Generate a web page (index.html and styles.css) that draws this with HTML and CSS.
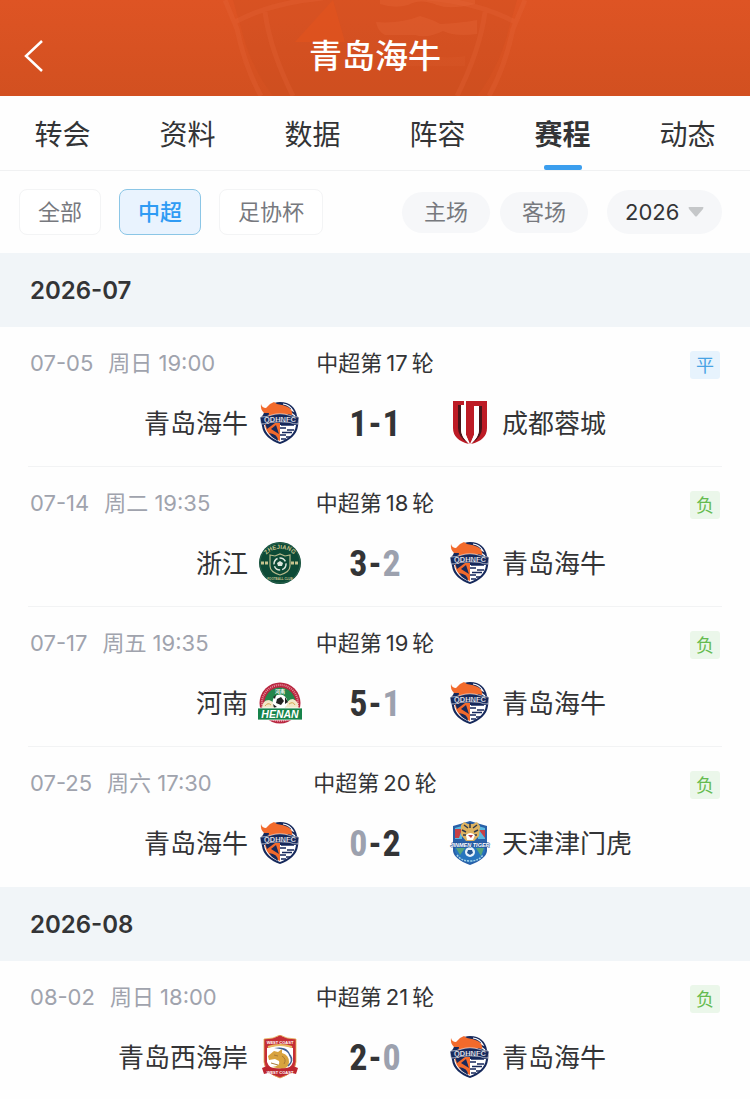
FILE: index.html
```html
<!DOCTYPE html>
<html lang="zh-CN">
<head>
<meta charset="utf-8">
<meta name="viewport" content="width=device-width, initial-scale=1">
<title>青岛海牛</title>
<link rel="stylesheet" href="styles.css">
</head>
<body>
<svg class="defs" aria-hidden="true">
  <symbol id="crest-hainiu" viewBox="0 0 44 44">
    <path d="M22 1C32 1 38 7 39 15L41 17L40 25C39 34 31 40 22 43C13 40 5 34 4 25L2 17L5 14C8 6 14 1 22 1Z" fill="#16295c"/>
    <path d="M6 24H38C37 33 30 38 22 41C14 38 7 33 6 24Z" fill="#fff"/>
    <path d="M7 22H22V40C14 37 8 32 7 24Z" fill="#f26a2c"/>
    <path d="M7 22H17L9 28ZM18 24L21 33L13 28Z" fill="#16295c"/>
    <path d="M11 32Q20 33 20 40L14 36Z" fill="#16295c"/>
    <path d="M23 24h13M22 27h6M29 29h7M24 31.500h10M22 34h6M28 36h5M23 38h5" stroke="#16295c" stroke-width="1.600" fill="none"/>
    <path d="M25 3Q32 4 35 10L31 8M33 12L37 15" stroke="#fff" stroke-width="1.200" fill="none"/>
    <path d="M3 3Q4 7 8 7L12 3L16 1L19 3Q26 4 30 6Q35 9 34 14L30 13L28 17H10L11 12L6 12Q2 8 3 3Z" fill="#f26a2c"/>
    <path d="M2 16Q9 16 12 14.500Q22 11 32 14.500Q35 16 41 16L40 23Q35 23 32 21.500Q22 20 12 21.500Q9 23 3 23Z" fill="#16295c" stroke="#fff" stroke-width=".6"/>
    <text x="22" y="21" text-anchor="middle" class="crest-text" font-size="7.500" fill="#fff" stroke="#16295c" stroke-width=".2">QDHNFC</text>
  </symbol>
  <symbol id="crest-chengdu" viewBox="0 0 44 44">
    <path d="M5 0H16V4H13V29Q13 36 21 43Q5 39 5 27Z" fill="#bd1b25"/>
    <path d="M18 0H39V27Q39 39 23 43Q31 36 31 29V5H26V34L22 43L18 34Z" fill="#bd1b25"/>
    <path d="M10 4H13V29Q13 36 20 42Q10 36 10 27ZM31 5H34V27Q34 36 24 42Q31 36 31 29Z" fill="#48151a"/>
    <path d="M13 5H18V34L21 42Q13 36 13 29ZM26 5H31V29Q31 36 23 42L26 34Z" fill="#fff"/>
  </symbol>
  <symbol id="crest-zhejiang" viewBox="0 0 44 44">
    <circle cx="22" cy="22" r="21" fill="#0d4a36"/>
    <circle cx="22" cy="22" r="20" fill="none" stroke="#28604b" stroke-width="1"/>
    <path d="M12 14L17 15L22 13L27 15L32 14V25Q32 31 22 34Q12 31 12 25Z" fill="#0d4a36" stroke="#b6b98b" stroke-width="1.200"/>
    <circle cx="22" cy="23" r="6" fill="none" stroke="#dee8de" stroke-width="1.500" stroke-dasharray="7 2"/>
    <path d="M19 22l3-2 3 2-1 3h-4z" fill="#dee8de"/>
    <path d="M3 22h8M33 22h8" stroke="#c6c38e" stroke-width="3" stroke-dasharray="3 1"/>
    <path id="zj-arc" d="M7 17Q10 8 22 8Q34 8 37 17" fill="none"/>
    <text class="crest-text" font-size="6" fill="#c6c38e" text-anchor="middle"><textPath href="#zj-arc" startOffset="50%">ZHEJIANG</textPath></text>
    <text x="22" y="38.500" text-anchor="middle" class="crest-text" font-size="3" fill="#c6c38e">FOOTBALL CLUB</text>
  </symbol>
  <symbol id="crest-henan" viewBox="0 0 44 44">
    <circle cx="22" cy="22" r="20.500" fill="#b82740"/>
    <circle cx="22" cy="22" r="18" fill="none" stroke="#e58e9a" stroke-width="2" stroke-dasharray="1 1"/>
    <circle cx="22" cy="22" r="15.500" fill="#25864b"/>
    <path d="M4 28Q4 19 11 19Q16 20 18 27ZM27 27Q29 18 35 18Q42 21 40 28Z" fill="#f2e7c8"/>
    <path d="M7 25q3-4 6-1M31 23q4-3 6 1" fill="none" stroke="#d8a450"/>
    <circle cx="22" cy="21" r="7.500" fill="#fff"/>
    <path d="M19 18l4-2 3 4-3 4-5-2zM15 16l3-2-1 4zM27 16l3 5-3 2zM15 23l4 3-3 1z" fill="#222"/>
    <path d="M0 27H44V39H0Z" fill="#16834a"/>
    <path d="M0 27H44M0 39H44" stroke="#fff" stroke-width=".8"/>
    <text x="22" y="12" text-anchor="middle" class="crest-text" font-size="5" fill="#fff">河南</text>
    <text x="22" y="37" text-anchor="middle" class="crest-text crest-slant" font-size="10.500" fill="#fff">HENAN</text>
  </symbol>
  <symbol id="crest-tianjin" viewBox="0 0 44 44">
    <path d="M5 5L12 3L22 0L32 3L39 5V30Q38 38 22 44Q6 38 5 30Z" fill="#2860a8"/>
    <path d="M7 7L14 5V18H7Z" fill="#5ab8df"/>
    <path d="M30 5L37 7V18H30Z" fill="#5ab8df"/>
    <path d="M7 8h7l-3 9H7Z" fill="#c64045"/><path d="M31 9h6v8z" fill="#c64045"/>
    <path d="M7 26H37V31Q34 38 22 42Q10 38 7 31Z" fill="#2875be"/>
    <path d="M8 27h9l-5 7z" fill="#57a57b"/><path d="M28 27h8l-3 8z" fill="#57a57b"/>
    <path d="M13 4L16 1L20 3H25L29 1L32 5L31 15L26 20H18L13 14Z" fill="#deb260"/>
    <path d="M16 4l4 3M29 4l-4 3M22 2v5M14 9l4 2M30 9l-4 2M15 14l3 0M29 14h-3" stroke="#303a4b" stroke-width="1.500"/>
    <path d="M18 14Q22 10 27 14L25 19H19Z" fill="#fff"/><path d="M20 14h5l-2 3z" fill="#bd4147"/>
    <circle cx="22" cy="31" r="5" fill="#e8f2fb"/><path d="M20 29l4 0 1 3-3 2-3-2z" fill="#245592"/>
    <path d="M9 34Q13 40 22 40Q31 40 35 34" fill="none" stroke="#9fd2e8" stroke-width="1.500" stroke-dasharray="2 1"/>
    <text x="22" y="26" text-anchor="middle" class="crest-text crest-slant crest-outline" font-size="5.500">JINMEN TIGER</text>
  </symbol>
  <symbol id="crest-westcoast" viewBox="0 0 44 44">
    <path d="M6 4Q16 4 22 0Q28 4 38 4V27Q37 38 22 43Q7 38 6 27Z" fill="#c52e36" stroke="#e5ad54" stroke-width=".8"/>
    <path d="M9 13Q22 8 35 13V27Q33 34 22 37Q11 34 9 27Z" fill="#fff"/>
    <path d="M16 13Q32 10 33 24L30 18Q27 14 16 13Z" fill="#3d5e94"/>
    <path d="M10 21L16 16L20 17L24 14L24 18Q31 20 31 27Q31 33 24 34L14 32Q23 31 21 26L17 24L11 25Z" fill="#d8a33e"/>
    <path d="M16 20l4 1M24 21q5 3 2 8M13 28l7 2" fill="none" stroke="#a87a36"/>
    <path d="M32 20q4 6-2 11" fill="none" stroke="#456493" stroke-width="1.500"/>
    <path d="M4 33L9 31Q22 36 35 31L40 33L38 39L34 38Q22 43 10 38L6 39Z" fill="#bd2730"/>
    <path d="M10 12Q22 8 34 12" fill="none" stroke="#e8bd62" stroke-width="2"/>
    <text x="22" y="8.500" text-anchor="middle" class="crest-text" font-size="4" fill="#fff">WEST COAST</text>
    <text x="22" y="38.500" text-anchor="middle" class="crest-text" font-size="4" fill="#fff">WEST COAST</text>
  </symbol>
</svg>

<header class="topbar">
  <svg class="watermark" viewBox="0 0 320 96" aria-hidden="true">
    <path d="M18 0H302L294 28Q285 66 262 96H58Q35 66 26 28Z" fill="#c44c20" opacity=".2"/>
    <path d="M10 0L22 29Q30 67 46 96M310 0L298 29Q290 67 274 96M20 22Q55 3 108 -2M300 22Q265 3 212 -2M50 12Q55 50 78 96M270 12Q265 50 242 96" fill="none" stroke="#e8693a" stroke-width="5" opacity=".25"/>
    <path d="M118 0L130 42L80 42Z" fill="#e6541c" opacity=".5"/>
    <path d="M165 0H260V4Q235 10 222 5Q205 -2 193 5Q180 9 165 4ZM161 22Q185 24 205 16Q219 20 225 24Q245 23 262 20V34Q240 37 228 31Q212 39 200 35H170Q163 32 161 22Z" fill="#e8693a" opacity=".3"/>
    <path d="M174 56Q195 60 208 52Q225 60 250 56V66H174Z" fill="#e8693a" opacity=".12"/>
  </svg>
  <button class="back" type="button" aria-label="返回">
    <svg viewBox="0 0 20 34"><path d="M18 2L2 17L18 32" fill="none" stroke="currentColor" stroke-width="2.500"/></svg>
  </button>
  <h1 class="title">青岛海牛</h1>
</header>

<nav class="tabs">
  <a class="tab" href="#transfer">转会</a>
  <a class="tab" href="#profile">资料</a>
  <a class="tab" href="#stats">数据</a>
  <a class="tab" href="#squad">阵容</a>
  <a class="tab tab-active" href="#schedule" aria-current="page">赛程</a>
  <a class="tab" href="#news">动态</a>
</nav>

<div class="filters">
  <div class="chips">
    <button class="chip" type="button">全部</button>
    <button class="chip chip-active" type="button" aria-pressed="true">中超</button>
    <button class="chip" type="button">足协杯</button>
  </div>
  <div class="venues">
    <button class="pill" type="button">主场</button>
    <button class="pill" type="button">客场</button>
  </div>
  <div class="season">
    <select class="season-select" aria-label="赛季"><option>2026</option></select>
    <svg class="season-arrow" viewBox="0 0 16 10" aria-hidden="true"><path d="M1 0H15Q16 0 15 2L9 9Q8 10 7 9L1 2Q0 0 1 0Z" fill="#c5c7c9"/></svg>
  </div>
</div>

<main>
  <section>
    <h2 class="month">2026-07</h2>
    <article class="match">
      <div class="meta"><time class="time"><span>07-05</span><span>周日 19:00</span></time><span class="round">中超第<span>17</span>轮</span><span class="result draw">平</span></div>
      <div class="fixture">
        <div class="team home"><span>青岛海牛</span><svg class="crest"><use href="#crest-hainiu"/></svg></div>
        <div class="score"><span>1</span><span>-</span><span>1</span></div>
        <div class="team"><svg class="crest"><use href="#crest-chengdu"/></svg><span>成都蓉城</span></div>
      </div>
    </article>
    <article class="match">
      <div class="meta"><time class="time"><span>07-14</span><span>周二 19:35</span></time><span class="round">中超第<span>18</span>轮</span><span class="result loss">负</span></div>
      <div class="fixture">
        <div class="team home"><span>浙江</span><svg class="crest"><use href="#crest-zhejiang"/></svg></div>
        <div class="score"><span>3</span><span>-</span><span class="lost">2</span></div>
        <div class="team"><svg class="crest"><use href="#crest-hainiu"/></svg><span>青岛海牛</span></div>
      </div>
    </article>
    <article class="match">
      <div class="meta"><time class="time"><span>07-17</span><span>周五 19:35</span></time><span class="round">中超第<span>19</span>轮</span><span class="result loss">负</span></div>
      <div class="fixture">
        <div class="team home"><span>河南</span><svg class="crest"><use href="#crest-henan"/></svg></div>
        <div class="score"><span>5</span><span>-</span><span class="lost">1</span></div>
        <div class="team"><svg class="crest"><use href="#crest-hainiu"/></svg><span>青岛海牛</span></div>
      </div>
    </article>
    <article class="match">
      <div class="meta"><time class="time"><span>07-25</span><span>周六 17:30</span></time><span class="round">中超第<span>20</span>轮</span><span class="result loss">负</span></div>
      <div class="fixture">
        <div class="team home"><span>青岛海牛</span><svg class="crest"><use href="#crest-hainiu"/></svg></div>
        <div class="score"><span class="lost">0</span><span>-</span><span>2</span></div>
        <div class="team"><svg class="crest"><use href="#crest-tianjin"/></svg><span>天津津门虎</span></div>
      </div>
    </article>
  </section>
  <section>
    <h2 class="month">2026-08</h2>
    <article class="match">
      <div class="meta"><time class="time"><span>08-02</span><span>周日 18:00</span></time><span class="round">中超第<span>21</span>轮</span><span class="result loss">负</span></div>
      <div class="fixture">
        <div class="team home"><span>青岛西海岸</span><svg class="crest"><use href="#crest-westcoast"/></svg></div>
        <div class="score"><span>2</span><span>-</span><span class="lost">0</span></div>
        <div class="team"><svg class="crest"><use href="#crest-hainiu"/></svg><span>青岛海牛</span></div>
      </div>
    </article>
  </section>
</main>
</body>
</html>
```
FILE: styles.css
```css
* { box-sizing: border-box; }

body {
  margin: 0;
  background: #fefefe;
  color: #333436;
  font-family: Inter, "Noto Sans CJK SC", sans-serif;
  font-size: 22px;
  line-height: 32px;
}

button, select { font: inherit; color: inherit; margin: 0; cursor: pointer; }
h1, h2 { margin: 0; }

.defs { display: none; }
.crest-text { font-family: "Liberation Sans", "Noto Sans CJK SC", sans-serif; font-weight: 700; }
.crest-slant { font-style: italic; }
.crest-outline { fill: #fff; stroke: #24549a; stroke-width: 1px; paint-order: stroke; }

.topbar {
  position: relative;
  display: grid;
  grid-template-columns: 80px 1fr 80px;
  align-items: center;
  height: 96px;
  padding-top: 16px;
  overflow: hidden;
  background: linear-gradient(#de5424, #d25020);
  color: #fff;
}
.watermark { position: absolute; top: 0; left: 50%; width: 320px; height: 96px; transform: translateX(-50%); }
.back { position: relative; justify-self: start; height: 48px; padding: 0 24px; border: 0; background: none; display: flex; align-items: center; color: #fff; }
.back svg { width: 20px; height: 34px; }
.title { position: relative; text-align: center; font-size: 33px; line-height: 48px; font-weight: 500; }

.tabs {
  display: grid;
  grid-template-columns: repeat(6, 1fr);
  border-bottom: 1px solid #f0f1f2;
}
.tab {
  position: relative;
  height: 74px;
  line-height: 78px;
  text-align: center;
  font-size: 28px;
  color: inherit;
  text-decoration: none;
}
.tab-active { font-weight: 700; }
.tab-active::after {
  content: "";
  position: absolute;
  left: 50%;
  bottom: 0;
  width: 38px;
  height: 5px;
  margin-left: -19px;
  border-radius: 2px;
  background: #3b9eee;
}

.filters { display: flex; align-items: center; height: 82px; padding: 0 28px 0 19px; }
.chips { display: flex; gap: 18px; }
.chip { height: 46px; padding: 0 18px; border: 1px solid #f3f4f5; border-radius: 8px; background: #fff; color: #77797e; }
.chip-active { border-color: #8bc6e6; background: #e9f3fe; color: #2f9bf4; font-weight: 500; }
.venues { display: flex; gap: 10px; margin-left: auto; }
.pill { height: 41px; padding: 0 22px; border: 0; border-radius: 21px; background: #f6f7f9; color: #77797e; }
.season { position: relative; width: 115px; margin-left: 19px; }
.season-select { display: block; width: 100%; height: 44px; padding: 0 18px; border: 0; border-radius: 22px; background: #f6f7f9; appearance: none; }
.season-arrow { position: absolute; right: 18px; top: 17px; width: 16px; height: 10px; pointer-events: none; }

.month { height: 74px; padding: 0 30px; background: #f1f5f8; font-size: 24px; line-height: 75px; font-weight: 600; }

.match { height: 140px; margin: 0 28px; padding: 20px 2px 0; border-bottom: 1px solid #f2f3f4; }
.match:last-child { border-bottom-color: transparent; }
.meta { display: grid; grid-template-columns: 1fr auto 1fr; height: 32px; }
.time { display: flex; gap: 15px; color: #a0a3ad; }
.round { display: flex; gap: 4px; }
.result { justify-self: end; align-self: end; width: 30px; height: 28px; border-radius: 3px; text-align: center; font-size: 18px; line-height: 30px; }
.draw { background: #e7f3fd; color: #48a3e4; }
.loss { background: #ebf7ea; color: #65bb4f; }

.fixture { display: grid; grid-template-columns: 1fr 146px 1fr; align-items: center; height: 46px; margin-top: 20px; }
.team { display: flex; align-items: center; gap: 10px; font-size: 26px; line-height: 40px; white-space: nowrap; }
.team span { padding-top: 2px; }
.home { justify-content: flex-end; }
.crest { flex: none; width: 44px; height: 44px; }
.score { display: flex; justify-content: center; gap: 1px; padding-top: 2px; font-family: "Roboto Condensed", "Liberation Sans Narrow", Roboto, sans-serif; font-size: 36px; line-height: 46px; font-weight: 700; }
.lost { color: #9ca1ae; }
```
